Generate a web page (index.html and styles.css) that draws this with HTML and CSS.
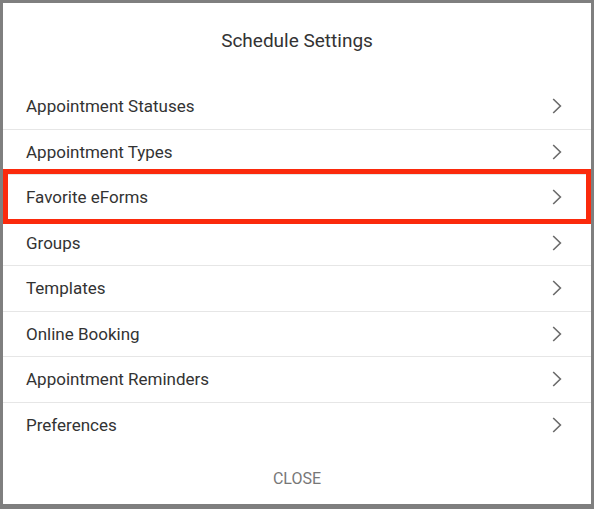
FILE: index.html
```html
<!DOCTYPE html>
<html lang="en">
<head>
    <meta charset="UTF-8">
    <meta name="viewport" content="width=device-width, initial-scale=1.0">
    <title>Schedule Settings</title>
    <link rel="stylesheet" href="styles.css">
</head>
<body>
    <div class="dialog">
        <h1 class="dialog-title">Schedule Settings</h1>
        <ul class="settings-list">
            <li class="settings-item"><span>Appointment Statuses</span><svg class="chevron" viewBox="0 0 10 16"><polyline points="1.2,1 8.4,8 1.2,15"/></svg></li>
            <li class="settings-item"><span>Appointment Types</span><svg class="chevron" viewBox="0 0 10 16"><polyline points="1.2,1 8.4,8 1.2,15"/></svg></li>
            <li class="settings-item highlighted"><span>Favorite eForms</span><svg class="chevron" viewBox="0 0 10 16"><polyline points="1.2,1 8.4,8 1.2,15"/></svg></li>
            <li class="settings-item"><span>Groups</span><svg class="chevron" viewBox="0 0 10 16"><polyline points="1.2,1 8.4,8 1.2,15"/></svg></li>
            <li class="settings-item"><span>Templates</span><svg class="chevron" viewBox="0 0 10 16"><polyline points="1.2,1 8.4,8 1.2,15"/></svg></li>
            <li class="settings-item"><span>Online Booking</span><svg class="chevron" viewBox="0 0 10 16"><polyline points="1.2,1 8.4,8 1.2,15"/></svg></li>
            <li class="settings-item"><span>Appointment Reminders</span><svg class="chevron" viewBox="0 0 10 16"><polyline points="1.2,1 8.4,8 1.2,15"/></svg></li>
            <li class="settings-item"><span>Preferences</span><svg class="chevron" viewBox="0 0 10 16"><polyline points="1.2,1 8.4,8 1.2,15"/></svg></li>
        </ul>
        <div class="dialog-actions">
            <button class="close-button" type="button">Close</button>
        </div>
    </div>
</body>
</html>
```

FILE: styles.css
```css
html, body {
    margin: 0;
    padding: 0;
}
body {
    background-color: #7f7f7f;
    font-family: Roboto, 'Liberation Sans', sans-serif;
    width: 594px;
    height: 509px;
    overflow: hidden;
}
.dialog {
    margin: 3px 3px 0 3px;
    height: 501px;
    background-color: #fff;
    display: flex;
    flex-direction: column;
}
.dialog-title {
    margin: 0;
    height: 81px;
    box-sizing: border-box;
    padding-top: 27px;
    text-align: center;
    font-size: 19px;
    font-weight: 400;
    color: #333;
    line-height: 22px;
}
.settings-list {
    list-style: none;
    margin: 0;
    padding: 0;
}
.settings-item {
    position: relative;
    display: flex;
    align-items: center;
    justify-content: space-between;
    height: 45.5px;
    box-sizing: border-box;
    padding: 0 29px 0 23px;
    border-bottom: 1px solid #e6e6e6;
    font-size: 17px;
    color: #333;
}
.settings-item:last-child {
    border-bottom: none;
}
.chevron {
    width: 10px;
    height: 16px;
    fill: none;
    stroke: #6b6b6b;
    stroke-width: 1.6;
}
.highlighted::after {
    content: '';
    position: absolute;
    left: 0;
    right: 0;
    top: -6px;
    bottom: -4px;
    border: 5px solid #fb2a0c;
    pointer-events: none;
}
.dialog-actions {
    flex: 1;
    display: flex;
    align-items: center;
    justify-content: center;
    padding-top: 4px;
}
.close-button {
    background: none;
    border: none;
    font-family: Roboto, 'Liberation Sans', sans-serif;
    font-size: 16px;
    color: #777;
    text-transform: uppercase;
    padding: 6px 8px;
}
```
